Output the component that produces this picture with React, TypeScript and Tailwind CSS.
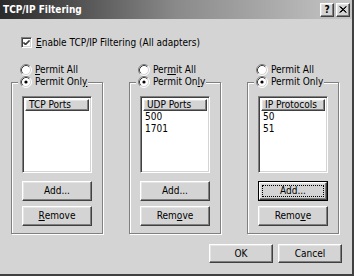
import React from 'react';

const raised =
  'border border-t-white border-l-white border-r-[#404040] border-b-[#404040] shadow-[inset_-1px_-1px_0_#808080,inset_1px_1px_0_#e4e4e4] bg-[#d4d4d4]';
const sunken =
  'border border-t-[#808080] border-l-[#808080] border-r-white border-b-white shadow-[inset_1px_1px_0_#404040,inset_-1px_-1px_0_#d4d4d4]';

const Radio: React.FC<{ checked?: boolean }> = ({ checked }) => (
  <svg width="12" height="12" viewBox="0 0 12 12" className="shrink-0">
    <circle cx="6" cy="6" r="5" fill="white" />
    <path d="M2.11 9.89 A5.5 5.5 0 0 1 9.89 2.11" stroke="#808080" fill="none" />
    <path d="M9.89 2.11 A5.5 5.5 0 0 1 2.11 9.89" stroke="white" fill="none" />
    <path d="M2.82 9.18 A4.5 4.5 0 0 1 9.18 2.82" stroke="#404040" fill="none" />
    <path d="M9.18 2.82 A4.5 4.5 0 0 1 2.82 9.18" stroke="#d4d4d4" fill="none" />
    {checked && <circle cx="6" cy="6" r="1.6" fill="black" />}
  </svg>
);

const Btn: React.FC<{ children: React.ReactNode; focused?: boolean; className?: string }> = ({
  children,
  focused,
  className = '',
}) =>
  focused ? (
    <div className={`flex border border-black ${className}`}>
      <div className={`flex flex-1 p-[2px] ${raised}`}>
        <div className="flex flex-1 items-center justify-center border border-dotted border-black">
          {children}
        </div>
      </div>
    </div>
  ) : (
    <div className={`flex items-center justify-center ${raised} ${className}`}>{children}</div>
  );

const U: React.FC<{ children: React.ReactNode }> = ({ children }) => <span className="underline">{children}</span>;

type Col = {
  all: React.ReactNode;
  only: React.ReactNode;
  header: string;
  items: string[];
  remove: React.ReactNode;
  focused?: boolean;
};

const cols: Col[] = [
  {
    all: <><U>P</U>ermit All</>,
    only: <>Permit Onl<U>y</U></>,
    header: 'TCP Ports',
    items: [],
    remove: <><U>R</U>emove</>,
  },
  {
    all: <>Per<U>m</U>it All</>,
    only: <>Permit On<U>l</U>y</>,
    header: 'UDP Ports',
    items: ['500', '1701'],
    remove: <>Rem<U>o</U>ve</>,
  },
  {
    all: <>Permit All</>,
    only: <>Permit Only</>,
    header: 'IP Protocols',
    items: ['50', '51'],
    remove: <>Remo<U>v</U>e</>,
    focused: true,
  },
];

const Column: React.FC<{ c: Col }> = ({ c }) => (
  <div className="flex w-[92px] flex-col">
    <div className="flex h-[11px] items-center gap-[3px] pl-[9px]">
      <Radio />
      <span>{c.all}</span>
    </div>
    <div className="relative mt-[7px] flex flex-col border border-[#808080] px-[10px] pt-[13px] pb-[7px] shadow-[inset_1px_1px_0_white,1px_1px_0_white]">
      <div className="absolute -top-[7px] left-[6px] flex h-[12px] items-center gap-[3px] bg-[#d4d4d4] pl-[2px] pr-[1px]">
        <Radio checked />
        <span>{c.only}</span>
      </div>
      <div className={`flex h-[77px] flex-col bg-white p-[2px] ${sunken}`}>
        <div className={`flex h-[12px] items-center pl-[3px] leading-none ${raised}`}>{c.header}</div>
        {c.items.map((it) => (
          <div key={it} className="flex h-[12px] items-center pl-[2px]">
            {it}
          </div>
        ))}
      </div>
      <Btn focused={c.focused} className="mt-[8px] h-[20px]">
        Add...
      </Btn>
      <Btn className="mt-[5px] h-[20px]">{c.remove}</Btn>
    </div>
  </div>
);

export default function App() {
  return (
    <div className="flex h-[276px] w-[354px] flex-col border-r-2 border-b-2 border-[#404040] bg-[#d4d4d4] font-['DejaVu_Sans_Condensed','DejaVu_Sans',sans-serif] font-stretch-condensed text-[10px] leading-none text-black">
      {/* Title bar */}
      <div className="flex h-[19px] items-center justify-between bg-linear-to-r from-[#2a2a2a] via-[#8a8a8a] to-[#c6c6c6] pl-[3px] pr-[2px]">
        <span className="text-[10px] font-bold text-white">TCP/IP Filtering</span>
        <div className="flex gap-[2px]">
          <div className={`flex h-[14px] w-[14px] items-center justify-center text-[10px] font-bold ${raised}`}>?</div>
          <div className={`flex h-[14px] w-[14px] items-center justify-center ${raised}`}>
            <svg width="8" height="7" viewBox="0 0 8 7">
              <path d="M0.5 0.5 L7 6.5 M1.5 0.5 L7.5 6.5 M7 0.5 L0.5 6.5 M7.5 0.5 L1.5 6.5" stroke="black" strokeWidth="1" />
            </svg>
          </div>
        </div>
      </div>

      {/* Enable checkbox */}
      <div className="mt-[18px] flex items-center gap-[4px] pl-[21px]">
        <div className={`flex h-[11px] w-[11px] items-center justify-center bg-white ${sunken}`}>
          <svg width="7" height="7" viewBox="0 0 7 7">
            <path d="M0.5 3 L2.5 5 L6.5 1 M0.5 4 L2.5 6 L6.5 2" stroke="black" fill="none" />
          </svg>
        </div>
        <span>
          <U>E</U>nable TCP/IP Filtering (All adapters)
        </span>
      </div>

      {/* Columns */}
      <div className="mt-[16px] flex gap-[26px] pl-[11px]">
        {cols.map((c) => (
          <Column key={c.header} c={c} />
        ))}
      </div>

      {/* Dialog buttons */}
      <div className="mt-[10px] flex justify-end gap-[5px] pr-[10px]">
        <Btn className="h-[19px] w-[64px]">OK</Btn>
        <Btn className="h-[19px] w-[64px]">Cancel</Btn>
      </div>
    </div>
  );
}
